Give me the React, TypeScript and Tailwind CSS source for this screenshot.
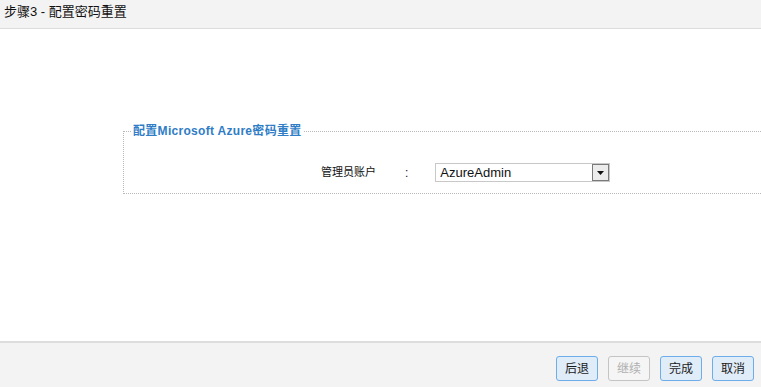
import React from 'react';

const font = { fontFamily: '"Liberation Sans", "Noto Sans CJK SC", sans-serif' };

function FooterButton({ label, disabled }: { label: string; disabled?: boolean }) {
  return (
    <button
      disabled={disabled}
      className={
        disabled
          ? 'w-[42px] h-[25px] rounded-[3px] border border-[#c4c4c4] bg-[#f5f5f5] text-[12px] text-[#b0b0b0]'
          : 'w-[42px] h-[25px] rounded-[3px] border border-[#6cadea] bg-[#e1ecf9] text-[12px] text-[#1a1a1a]'
      }
    >
      {label}
    </button>
  );
}

export default function App() {
  return (
    <div className="w-[761px] h-[387px] flex flex-col overflow-hidden bg-white" style={font}>
      <div className="h-[29px] shrink-0 bg-[#f3f3f3] border-b border-[#dcdcdc] flex items-center pl-[4px] pb-[4px]">
        <span className="text-[13px] text-[#111]">步骤3 - 配置密码重置</span>
      </div>

      <div className="flex-1 pt-[95px]">
        <fieldset className="ml-[123px] w-[700px] border border-dotted border-[#b8b8b8] pb-[11px]">
          <legend className="ml-[8px] px-[1px] text-[12px] font-bold text-[#2f7dc6] leading-[14px] tracking-[0.3px]">
            配置Microsoft Azure密码重置
          </legend>
          <div className="flex items-center mt-[25px]">
            <span className="ml-[197px] w-[84px] text-[11px] text-[#111]">管理员账户</span>
            <span className="text-[12px] text-[#111]">:</span>
            <div className="ml-[27px] w-[175px] h-[19px] border border-[#c8c8c8] flex items-center">
              <span className="flex-1 pl-[4px] text-[13px] text-[#111] leading-none">AzureAdmin</span>
              <div className="w-[17px] h-[17px] border border-[#7a7a7a] bg-[#ececec] flex items-center justify-center">
                <svg width="7" height="4" viewBox="0 0 7 4">
                  <path d="M0 0h7L3.5 4z" fill="#111" />
                </svg>
              </div>
            </div>
          </div>
        </fieldset>
      </div>

      <div className="h-[46px] shrink-0 bg-[#f3f3f3] border-t-2 border-[#dddddd] flex justify-end items-start gap-[10px] pt-[13px] pr-[7px]">
        <FooterButton label="后退" />
        <FooterButton label="继续" disabled />
        <FooterButton label="完成" />
        <FooterButton label="取消" />
      </div>
    </div>
  );
}
